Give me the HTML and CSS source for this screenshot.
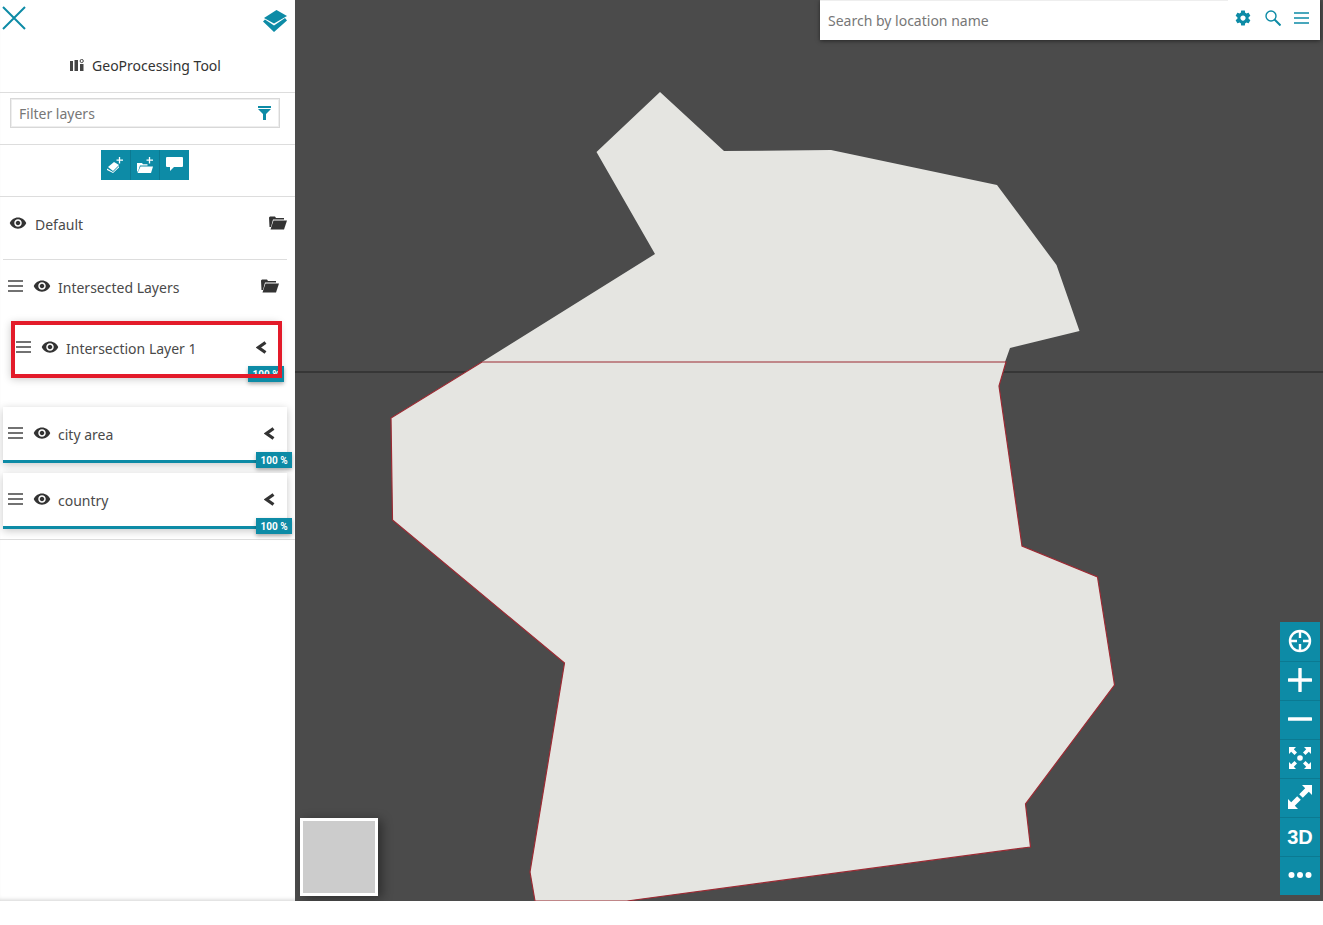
FILE: index.html
```html
<!DOCTYPE html>
<html lang="en">
    <head>
        <meta charset="UTF-8" />
        <meta name="viewport" content="width=device-width, initial-scale=1.0" />
        <title>GeoProcessing Tool</title>
        <link rel="stylesheet" href="styles.css">
    </head>
    <body>
        <svg class="defs" aria-hidden="true">
            <symbol id="eye" viewBox="0 0 24 24">
                <path d="M12 4.5C7 4.5 2.73 7.61 1 12c1.73 4.39 6 7.5 11 7.5s9.27-3.11 11-7.5c-1.73-4.39-6-7.5-11-7.5zM12 17c-2.76 0-5-2.24-5-5s2.24-5 5-5 5 2.24 5 5-2.24 5-5 5zm0-8c-1.66 0-3 1.34-3 3s1.34 3 3 3 3-1.34 3-3-1.34-3-3-3z" />
            </symbol>
            <symbol id="handle" viewBox="0 0 15 12">
                <path d="M0 1h15M0 6h15M0 11h15" fill="none" stroke="currentColor" stroke-width="1.4" />
            </symbol>
            <symbol id="folder" viewBox="0 0 18 14">
                <path d="M0 1.500 1 .5h5l1 1.500h8v1.500H4L2 11 .5 11z" />
                <path d="M4.500 4.500H18l-3 9H1.500z" />
            </symbol>
            <symbol id="chevron" viewBox="0 0 11 13">
                <path d="M9.500 1.500 2.500 6.500l7 5" fill="none" stroke="currentColor" stroke-width="3.200" />
            </symbol>
        </svg>

        <div class="app">
            <!--왼쪽 패널-->
            <aside class="sidebar">
                <div class="topbar">
                    <svg class="close-icon" viewBox="0 0 24 24"><path d="M1 1l22 22M23 1 1 23" fill="none" stroke="currentColor" stroke-width="2" /></svg>
                    <svg class="stack-icon" viewBox="0 0 24 22">
                        <path d="M13.500 0 24 6 11 13.500 1 8z" />
                        <path d="M0 11.500l2-2 9 6 11-7.500 2 2.500L11 22z" />
                    </svg>
                </div>
                <h1 class="title">
                    <svg class="title-icon" viewBox="0 0 14 12">
                        <path d="M0 2h3v10H0zM4.500 1H8v11H4.500zM10 5h3.500v7H10z" />
                        <circle cx="11.700" cy="2" r="1.600" fill="none" stroke="currentColor" />
                    </svg>
                    GeoProcessing Tool
                </h1>

                <div class="filter-row">
                    <div class="filter">
                        <input class="filter-input" type="text" placeholder="Filter layers" />
                        <svg class="filter-icon" viewBox="0 0 13 14">
                            <path d="M0 0h13v2H0zM0 3h13L8 8v6H5V8z" />
                        </svg>
                    </div>
                </div>

                <div class="action-row">
                    <div class="actions">
                        <button class="action" type="button">
                            <svg viewBox="0 0 16 16">
                                <path d="M1 10l6-5 5 3-6 6z" />
                                <path d="M0 11.500l6 3.500 6-6v1.500L6 16 0 13z" />
                                <path d="M12.500 0v6.500M9.500 3.200h6.500" stroke="#fff" stroke-width="1.300" fill="none" />
                            </svg>
                        </button>
                        <button class="action" type="button">
                            <svg viewBox="0 0 16 16">
                                <path d="M0 6h5l1 1.200h4.500v1.300H3l-2 6H0z" />
                                <path d="M3.500 9.500H16l-2 6.500H.500z" />
                                <path d="M12.500 0v6.500M9.500 3.200h6.500" stroke="#fff" stroke-width="1.300" fill="none" />
                            </svg>
                        </button>
                        <button class="action" type="button">
                            <svg viewBox="0 0 17 14">
                                <path d="M1 0h15a1 1 0 0 1 1 1v8a1 1 0 0 1-1 1H8l-4 4v-4H1a1 1 0 0 1-1-1V1a1 1 0 0 1 1-1z" />
                            </svg>
                        </button>
                    </div>
                </div>

                <!--레이어 목록-->
                <div class="group group-default">
                    <svg class="eye"><use href="#eye" /></svg>
                    <span class="name">Default</span>
                    <svg class="folder"><use href="#folder" /></svg>
                </div>

                <div class="group group-sub">
                    <svg class="handle"><use href="#handle" /></svg>
                    <svg class="eye"><use href="#eye" /></svg>
                    <span class="name">Intersected Layers</span>
                    <svg class="folder"><use href="#folder" /></svg>
                </div>

                <div class="layer layer-nested">
                    <svg class="handle"><use href="#handle" /></svg>
                    <svg class="eye"><use href="#eye" /></svg>
                    <span class="name">Intersection Layer 1</span>
                    <svg class="chevron"><use href="#chevron" /></svg>
                    <div class="bar"></div>
                    <span class="badge">100 %</span>
                    <div class="mark"></div>
                </div>

                <div class="layer">
                    <svg class="handle"><use href="#handle" /></svg>
                    <svg class="eye"><use href="#eye" /></svg>
                    <span class="name">city area</span>
                    <svg class="chevron"><use href="#chevron" /></svg>
                    <div class="bar"></div>
                    <span class="badge">100 %</span>
                </div>

                <div class="layer">
                    <svg class="handle"><use href="#handle" /></svg>
                    <svg class="eye"><use href="#eye" /></svg>
                    <span class="name">country</span>
                    <svg class="chevron"><use href="#chevron" /></svg>
                    <div class="bar"></div>
                    <span class="badge">100 %</span>
                </div>
                <div class="list-end"></div>
            </aside>

            <!--지도-->
            <main class="map">
                <svg class="shapes" viewBox="295 0 1028 901">
                    <path d="M295 372H1323" stroke="#2f2f2f" stroke-width="1.500" fill="none" />
                    <path d="M660 92 724 151 831 150 997 185 1056.500 265 1079.500 331 1010 348 1005 362H482L655 254 596.500 152z" fill="#e5e5e1" />
                    <path d="M482 362H1006L999 386 1022 546 1097.500 577 1114.500 685 1025.500 804 1030.500 847 627 901H535L530 872 564.500 663 392.500 520 391 418z" fill="#e5e5e1" stroke="#9c2a33" stroke-width="1.200" />
                </svg>

                <div class="search">
                    <input class="search-input" type="text" placeholder="Search by location name" />
                    <div class="search-icons">
                        <svg class="search-gear" viewBox="0 0 24 24"><path d="M19.430 12.980c.04-.32.07-.64.07-.98s-.03-.66-.07-.98l2.110-1.650c.19-.15.24-.42.12-.64l-2-3.460c-.12-.22-.39-.3-.61-.22l-2.490 1c-.52-.4-1.080-.73-1.690-.98l-.38-2.650C14.460 2.180 14.250 2 14 2h-4c-.25 0-.46.18-.49.42l-.38 2.650c-.61.25-1.170.59-1.690.98l-2.490-1c-.23-.09-.49 0-.61.22l-2 3.460c-.13.22-.07.49.12.64l2.110 1.650c-.04.32-.07.65-.07.98s.03.66.07.98l-2.110 1.650c-.19.15-.24.42-.12.64l2 3.460c.12.22.39.3.61.22l2.490-1c.52.4 1.080.73 1.690.98l.38 2.650c.03.24.24.42.49.42h4c.25 0 .46-.18.49-.42l.38-2.650c.61-.25 1.170-.59 1.690-.98l2.490 1c.23.09.49 0 .61-.22l2-3.460c.12-.22.07-.49-.12-.64l-2.110-1.650zM12 15.500c-1.930 0-3.500-1.570-3.500-3.500s1.570-3.500 3.500-3.500 3.500 1.570 3.500 3.500-1.570 3.500-3.500 3.500z" /></svg>
                        <svg class="search-glass" viewBox="0 0 16 16"><circle cx="6" cy="6" r="5" fill="none" stroke="currentColor" stroke-width="1.400" /><path d="M9.500 9.500 15.500 15.500" stroke="currentColor" stroke-width="2" fill="none" /></svg>
                        <svg class="search-menu" viewBox="0 0 15 12"><path d="M0 1h15M0 6h15M0 11h15" fill="none" stroke="currentColor" stroke-width="1.500" /></svg>
                    </div>
                </div>

                <div class="thumb"></div>

                <!--지도 도구-->
                <div class="tools">
                    <button class="tool" type="button">
                        <svg viewBox="0 0 24 24"><circle cx="12" cy="12" r="10" fill="none" stroke="#fff" stroke-width="2.400" /><path d="M12 2v7M12 15v7M2 12h7M15 12h7" stroke="#fff" stroke-width="2.400" fill="none" /></svg>
                    </button>
                    <button class="tool" type="button">
                        <svg viewBox="0 0 24 24"><path d="M12 1v22M1 12h22" stroke="#fff" stroke-width="3.400" stroke-linecap="round" fill="none" /></svg>
                    </button>
                    <button class="tool" type="button">
                        <svg viewBox="0 0 24 24"><path d="M1 12h22" stroke="#fff" stroke-width="3.400" stroke-linecap="round" fill="none" /></svg>
                    </button>
                    <button class="tool" type="button">
                        <svg viewBox="0 0 24 24">
                            <circle cx="12" cy="12" r="2.800" fill="#fff" />
                            <path d="M1 1h7L5.800 3.200 9 6.500 6.500 9 3.200 5.800 1 8zM23 1v7L20.800 5.800 17.500 9 15 6.500 18.200 3.200 16 1zM1 23V16L3.200 18.200 6.500 15 9 17.500 5.800 20.800 8 23zM23 23H16L18.200 20.800 15 17.500 17.500 15 20.800 18.200 23 16z" fill="#fff" />
                        </svg>
                    </button>
                    <button class="tool" type="button">
                        <svg viewBox="0 0 24 24"><path d="M14 0h10v10l-3.200-3.200-6 6-3.600-3.600 6-6zM10 24H0V14l3.200 3.200 6-6 3.600 3.600-6 6z" fill="#fff" /></svg>
                    </button>
                    <button class="tool tool-text" type="button">3D</button>
                    <button class="tool" type="button">
                        <svg viewBox="0 0 24 24"><circle cx="3.500" cy="12" r="3" fill="#fff" /><circle cx="12" cy="12" r="3" fill="#fff" /><circle cx="20.500" cy="12" r="3" fill="#fff" /></svg>
                    </button>
                </div>
            </main>
        </div>
    </body>
</html>
```

FILE: styles.css
```css
html,
body {
    margin: 0px;
    padding: 0px;
    background: #fff;
    font-family: "Noto Sans", "Open Sans", sans-serif;
    font-size: 14px;
    color: #4a4a4a;
}

button,
input {
    font-family: inherit;
    font-size: 14px;
    border: none;
    outline: none;
    padding: 0px;
    margin: 0px;
}

/* 심볼 모음 */
.defs {
    display: none;
}

.app {
    display: flex;
    height: 901px;
    box-shadow: 0 1px 3px rgba(0, 0, 0, 0.25);
}

/* 왼쪽 패널 */
.sidebar {
    flex: 0 0 295px;
    width: 295px;
    background: #fff;
    box-shadow: inset 0 -4px 4px -3px rgba(0, 0, 0, 0.18);
}

.topbar {
    display: flex;
    justify-content: space-between;
    align-items: flex-start;
    height: 36px;
    padding: 6px 8px 0 2px;
    box-sizing: border-box;
    color: #0d8ba6;
}

.close-icon {
    width: 24px;
    height: 24px;
}

.stack-icon {
    width: 24px;
    height: 22px;
    margin-top: 4px;
    fill: #0d8ba6;
}

.title {
    display: flex;
    justify-content: center;
    align-items: flex-end;
    gap: 8px;
    height: 57px;
    margin: 0px;
    padding: 0 4px 16px 0;
    box-sizing: border-box;
    font-size: 14px;
    font-weight: 400;
    line-height: 20px;
    color: #333;
    border-bottom: 1px solid #ddd;
}

.title-icon {
    width: 14px;
    height: 12px;
    margin-bottom: 5px;
    fill: #444;
    color: #444;
}

.filter-row {
    height: 52px;
    padding: 5px 15px 0 10px;
    box-sizing: border-box;
    border-bottom: 1px solid #ddd;
}

.filter {
    display: flex;
    align-items: center;
    height: 30px;
    padding: 0 8px;
    box-sizing: border-box;
    border: 1px solid #d8d8d8;
    box-shadow: inset 0 0 0 1px #eee;
}

.filter-input {
    flex: 1;
    min-width: 0;
    background: transparent;
    color: #777;
}

.filter-input::placeholder,
.search-input::placeholder {
    color: #777;
    opacity: 1;
}

.filter-icon {
    width: 13px;
    height: 14px;
    fill: #0d8ba6;
}

.action-row {
    display: flex;
    height: 52px;
    padding: 5px 0 0 101px;
    box-sizing: border-box;
    border-bottom: 1px solid #ddd;
}

.actions {
    display: flex;
    width: 88px;
    height: 30px;
    background: #0d8ba6;
}

.action {
    flex: 1;
    display: flex;
    justify-content: center;
    align-items: center;
    height: 30px;
    background: transparent;
    border-left: 1px solid #0b7a92;
}

.action:first-child {
    border-left: none;
}

.action svg {
    width: 16px;
    height: 16px;
    margin-top: -1px;
    fill: #fff;
}

.action:last-child svg {
    width: 17px;
    height: 14px;
    margin-top: -2px;
}

/* 레이어 행 */
.group {
    display: flex;
    align-items: flex-start;
    margin-left: 3px;
    margin-right: 8px;
    box-sizing: border-box;
}

.group-default {
    height: 63px;
    padding: 18px 0 0 6px;
    border-bottom: 1px solid #ddd;
}

.group-default .eye {
    margin-right: 8px;
}

.group-sub {
    height: 61px;
    padding: 18px 8px 0 5px;
}

.name {
    flex: 1;
    line-height: 20px;
}

.handle {
    flex: none;
    width: 15px;
    height: 12px;
    margin: 2px 10px 0 0;
    color: #444;
}

.eye {
    flex: none;
    width: 18px;
    height: 18px;
    margin: -1px 7px 0 0;
    fill: #333;
}

.folder {
    flex: none;
    width: 18px;
    height: 14px;
    margin-top: 1px;
    fill: #333;
}

.layer {
    position: relative;
    display: flex;
    align-items: flex-start;
    width: 284px;
    height: 56px;
    margin: 0 0 10px 3px;
    padding: 18px 12px 0 5px;
    box-sizing: border-box;
    background: #fff;
    box-shadow: 0 2px 8px rgba(0, 0, 0, 0.22);
}

.layer-nested {
    width: 268px;
    margin: 0 0 30px 11px;
}

.chevron {
    flex: none;
    width: 11px;
    height: 13px;
    margin-top: 2px;
    color: #333;
}

.bar {
    position: absolute;
    left: 0px;
    right: 0px;
    bottom: 0px;
    height: 3px;
    background: #0d8ba6;
}

.badge {
    position: absolute;
    top: 45px;
    right: -5px;
    width: 36px;
    height: 16px;
    padding-top: 1px;
    box-sizing: border-box;
    background: #0d8ba6;
    color: #fff;
    font-family: "Roboto", sans-serif;
    font-size: 10px;
    font-weight: 700;
    line-height: 15px;
    text-align: center;
    box-shadow: 0 2px 4px rgba(0, 0, 0, 0.3);
}

/* 빨간 표시 박스 */
.mark {
    position: absolute;
    top: 0px;
    left: 0px;
    right: -3px;
    bottom: -1px;
    border: 4px solid #e31b2a;
    box-sizing: border-box;
}

.list-end {
    border-top: 1px solid #ddd;
}

/* 지도 */
.map {
    position: relative;
    flex: 1;
    overflow: hidden;
    background: #4b4b4b;
}

.shapes {
    display: block;
    width: 100%;
    height: 100%;
}

.search {
    position: absolute;
    top: 0px;
    right: 3px;
    display: flex;
    align-items: center;
    width: 500px;
    height: 40px;
    background: #fff;
    box-shadow: 0 1px 4px rgba(0, 0, 0, 0.5);
}

.search-input {
    flex: 1;
    min-width: 0;
    height: 40px;
    padding: 0 0 0 8px;
    box-sizing: border-box;
    background: transparent;
    color: #777;
    border-top: 1px solid #eee;
}

.search-icons {
    display: flex;
    align-items: center;
    gap: 13px;
    padding: 0 11px 4px 6px;
    color: #0d8ba6;
}

.search-gear {
    width: 18px;
    height: 18px;
    fill: #0d8ba6;
}

.search-glass {
    width: 16px;
    height: 16px;
}

.search-menu {
    width: 15px;
    height: 12px;
}

.thumb {
    position: absolute;
    left: 5px;
    bottom: 5px;
    width: 78px;
    height: 78px;
    box-sizing: border-box;
    background: #ccc;
    border: 3px solid #fff;
    box-shadow: 4px 2px 10px rgba(0, 0, 0, 0.4);
}

.tools {
    position: absolute;
    right: 3px;
    bottom: 6px;
    display: flex;
    flex-direction: column;
    width: 40px;
}

.tool {
    display: flex;
    justify-content: center;
    align-items: center;
    height: 39px;
    background: #0d8ba6;
    border-top: 1px solid #0b7a92;
    box-sizing: border-box;
}

.tool:first-child {
    border-top: none;
}

.tool svg {
    width: 24px;
    height: 24px;
    margin-top: -2px;
}

.tool-text {
    color: #fff;
    font-family: "Liberation Sans", sans-serif;
    font-size: 20px;
    font-weight: 700;
}
```
